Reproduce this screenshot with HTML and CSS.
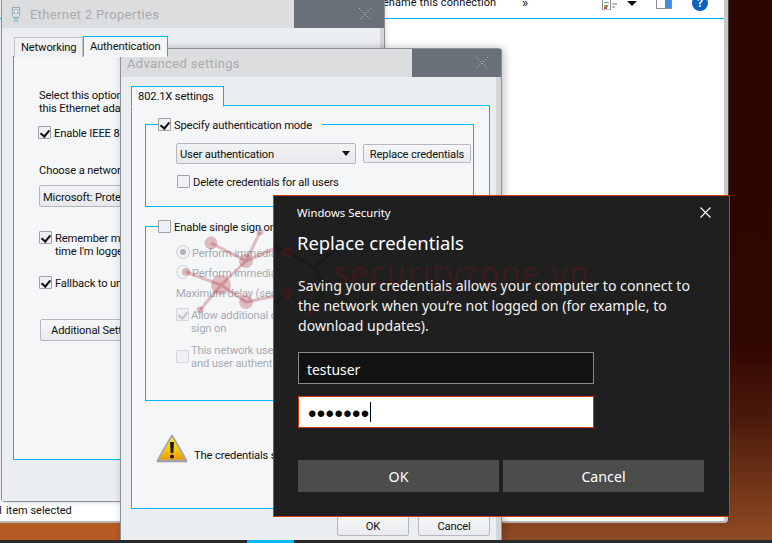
FILE: index.html
```html
<!DOCTYPE html>
<html lang="en">
<head>
<meta charset="utf-8">
<title>Replace credentials</title>
<link rel="stylesheet" href="styles.css">
</head>
<body>
<div class="desktop">
  <section class="explorer">
    <div class="toolbar">
      <span class="toolbar-label">Rename this connection</span>
      <span class="toolbar-more">»</span>
      <svg class="tb-view" width="16" height="10" viewBox="0 0 16 10"><path d="M1.5 -3h8v13h-8z" fill="#fff" stroke="#8d8d8d"/><path d="M3 2h5v1H3z" fill="#7a96b8"/><path d="M3 5h2v2H3z" fill="#c9a13c"/><path d="M5 5h2v2H5z" fill="#5ea05e"/><path d="M3 7h3v2H3z" fill="#b2584a"/><path d="M11 4h5M11 7h3" stroke="#777"/></svg>
      <span class="tb-caret"></span>
      <svg class="tb-pane" width="16" height="9" viewBox="0 0 16 9"><path d="M.5 -3h15v11.500H.5z" fill="#fff" stroke="#8d8d8d"/><path d="M9 -2h6v10H9z" fill="#3d8fdf"/></svg>
      <span class="tb-help">?</span>
    </div>
    <div class="explorer-space"></div>
    <div class="statusbar">1 item selected</div>
  </section>

  <section class="window props">
    <header class="titlebar">
      <svg class="net-icon" width="10" height="15" viewBox="0 0 10 15"><path d="M1.5 .5h7v8l-1.500 2h-4l-1.500-2z" fill="#d8e2e8" stroke="#98a8b0"/><path d="M3.500 2.500h3v4h-3z" fill="#f2f6f8" stroke="#a8b6bc"/><path d="M3 11h1v4H3zM4.500 11h1v4h-1zM6 11h1v4H6z" fill="#7fc4e8"/></svg>
      <span class="title-text">Ethernet 2 Properties</span>
      <span class="title-close"><svg width="14" height="14" viewBox="0 0 14 14"><path d="M1 1l12 12M13 1L1 13" stroke="#aeb3b9" stroke-dasharray="1.400 1.400"/></svg></span>
    </header>
    <div class="window-body props-body">
      <div class="tabs">
        <span class="tab tab-plain">Networking</span>
        <span class="tab tab-active props-active">Authentication</span>
      </div>
      <div class="pane props-pane">
        <p class="t p-intro">Select this option<br>this Ethernet adap</p>
        <label class="row p-enable"><span class="check on"></span><span class="t">Enable IEEE 8</span></label>
        <p class="t p-choose">Choose a networ</p>
        <div class="combo p-combo"><span class="t">Microsoft: Protec</span></div>
        <label class="row p-remember"><span class="check on"></span><span class="t">Remember my<br>time I'm logge</span></label>
        <label class="row p-fallback"><span class="check on"></span><span class="t">Fallback to un</span></label>
        <span class="btn p-additional">Additional Sett</span>
      </div>
    </div>
  </section>

  <section class="window advanced">
    <header class="titlebar">
      <span class="title-text adv-title">Advanced settings</span>
      <span class="title-close"><svg width="14" height="14" viewBox="0 0 14 14"><path d="M1 1l12 12M13 1L1 13" stroke="#aeb3b9" stroke-dasharray="1.400 1.400"/></svg></span>
    </header>
    <div class="window-body adv-body">
      <div class="tabs">
        <span class="tab tab-active adv-active">802.1X settings</span>
      </div>
      <div class="pane adv-pane">
        <fieldset class="group g-mode">
          <legend class="legend"><span class="check on"></span><span class="t">Specify authentication mode</span></legend>
          <div class="mode-row">
            <div class="combo mode-combo"><span class="t">User authentication</span><span class="arrow"></span></div>
            <span class="btn replace">Replace credentials</span>
          </div>
          <label class="row delete"><span class="check"></span><span class="t">Delete credentials for all users</span></label>
        </fieldset>
        <fieldset class="group g-sso">
          <legend class="legend"><span class="check"></span><span class="t">Enable single sign on</span></legend>
          <div class="row dis s1"><span class="radio on"></span><span class="t">Perform immediat</span></div>
          <div class="row dis s2"><span class="radio"></span><span class="t">Perform immediat</span></div>
          <p class="t dis s3">Maximum delay (sec</p>
          <div class="row dis s4"><span class="check on dim"></span><span class="t">Allow additional d<br>sign on</span></div>
          <div class="row dis s5"><span class="check dim"></span><span class="t">This network use<br>and user authent</span></div>
        </fieldset>
        <div class="row warning">
          <svg width="32" height="29" viewBox="0 0 32 29"><defs><linearGradient id="wy" x1="0" y1="0" x2="0" y2="1"><stop offset="0" stop-color="#fff600"/><stop offset=".55" stop-color="#fbc80a"/><stop offset="1" stop-color="#e79a00"/></linearGradient></defs><path d="M16 1.500 L30.500 26.500 H1.500 Z" fill="url(#wy)" stroke="#a9a9a9" stroke-width="2" stroke-linejoin="round"/><path d="M1 27.500h30" stroke="#9c9c9c" stroke-width="1.500"/><path d="M14 8h4l-.7 11h-2.600z" fill="#1a1a1a"/><circle cx="16" cy="22.500" r="2" fill="#1a1a1a"/></svg>
          <span class="t">The credentials s</span>
        </div>
      </div>
      <div class="footer">
        <span class="btn foot-btn">OK</span>
        <span class="btn foot-btn">Cancel</span>
      </div>
    </div>
  </section>

  <svg class="logo logo-light" width="110" height="120" viewBox="0 0 110 120" aria-hidden="true"><g class="wm-lines" stroke-width="3" fill="none"><path d="M31 31L66 49L80 20M66 49L41 73L6 60M41 73L66 90L110 81M41 73L20 98M66 49L110 30"/></g><g class="wm-dots"><circle cx="31" cy="31" r="6.500"/><circle cx="6" cy="60" r="4"/><circle cx="66" cy="49" r="7"/><circle cx="80" cy="20" r="3.500"/><circle cx="41" cy="73" r="10"/><circle cx="66" cy="90" r="7"/><circle cx="20" cy="98" r="3.500"/></g></svg>

  <section class="dialog">
    <svg class="logo logo-dark" width="80" height="90" viewBox="0 0 80 90" aria-hidden="true"><g class="wd-lines" stroke-width="2.500" fill="none"><path d="M0 20L13 26L40 41L62 24M40 41L52 62L36 86M13 67L36 86M0 78L13 67"/></g><g class="wd-dots"><circle cx="13" cy="26" r="6"/><circle cx="13" cy="67" r="6"/><circle cx="36" cy="86" r="4"/></g></svg>
    <header class="dialog-head">
      <span class="dialog-app">Windows Security</span>
      <svg class="dialog-x" width="11" height="11" viewBox="0 0 11 11"><path d="M.5.5l10 10M10.500.5l-10 10" stroke="#fff" stroke-width="1.100"/></svg>
    </header>
    <h1 class="dialog-title">Replace credentials</h1>
    <p class="wm-text">securityzone.vn</p>
    <p class="dialog-copy">Saving your credentials allows your computer to connect to the network when you’re not logged on (for example, to download updates).</p>
    <div class="field field-user">testuser</div>
    <div class="field field-pass"><span class="dots">•••••••</span><span class="caret"></span></div>
    <div class="dialog-actions">
      <span class="dialog-btn">OK</span>
      <span class="dialog-btn">Cancel</span>
    </div>
  </section>

  <div class="taskbar"><span class="task-active"></span></div>
</div>
</body>
</html>
```
FILE: styles.css
```css
* { box-sizing: border-box; }
html, body { margin: 0; padding: 0; }
body { width: 772px; height: 543px; overflow: hidden; font-family: Roboto, sans-serif; font-size: 11.200px; letter-spacing: -.15px; color: #111; }
p { margin: 0; }
.t { line-height: 13px; white-space: nowrap; transform: translateY(1px); }
.desktop {
  position: relative; width: 772px; height: 543px; overflow: hidden;
  background: linear-gradient(to bottom, #2f0500 0, #300602 340px, #4c1a0b 420px, #8a4720 530px, #8f4a22 543px);
}
.desktop::before {
  content: ""; position: absolute; left: 0; bottom: 3px; width: 360px; height: 30px; background: #b55b24;
}

/* explorer behind everything */
.explorer {
  position: absolute; left: 0; top: 0; width: 728px; height: 523px;
  display: flex; flex-direction: column;
  background: #fff; border-right: 4px solid #c6c7c8; border-bottom: 2px solid #b4b4b4; border-bottom-right-radius: 4px;
  box-shadow: 1px 0 0 #50453f;
}
.toolbar {
  height: 19px; flex: none; display: flex; align-items: flex-start; overflow: hidden;
  border-bottom: 1px solid #00b7f5; padding-left: 376px;
}
.toolbar-label { width: 146px; margin-top: -5px; line-height: 16px; letter-spacing: .1px; font-size: 11px; white-space: nowrap; }
.toolbar-more { width: 79px; margin-top: -5px; line-height: 16px; font-size: 13px; }
.tb-view { margin-right: 10px; }
.tb-caret { width: 0; height: 0; margin-top: 1px; margin-right: 19px; border-left: 5px solid transparent; border-right: 5px solid transparent; border-top: 5px solid #111; }
.tb-pane { margin-right: 20px; }
.tb-help { width: 16px; height: 16px; margin-top: -5px; border-radius: 50%; background: #0b63bd; color: #fff; text-align: center; font-weight: 700; font-size: 12px; line-height: 16px; }
.explorer-space { flex: 1; }
.statusbar { height: 20px; margin-left: -3px; line-height: 19px; font-size: 11px; letter-spacing: 0; white-space: nowrap; }

/* classic dialogs */
.window { position: absolute; display: flex; flex-direction: column; border-radius: 4px 4px 0 0; background: #ebeef1; }
.props { left: 1px; top: 0; width: 384px; height: 502px; border: 1px solid #8d9299; border-top: 0; box-shadow: 0 0 5px rgba(0,0,0,.2); border-radius: 0 0 4px 4px; }
.advanced { left: 120px; top: 48px; width: 382px; height: 492px; border: 1px solid #8d9299; border-bottom: 0; box-shadow: 2px 0 8px rgba(0,0,0,.25); }
.titlebar { height: 28px; flex: none; display: flex; align-items: center; background: linear-gradient(to right, #dcddde 0, #dcddde 76.500%, #6a7079 76.500%); }
.net-icon { margin-left: 9px; margin-right: 9px; }
.title-text { flex: 1; font-size: 13px; letter-spacing: .35px; color: #a8abae; white-space: nowrap; }
.adv-title { padding-left: 6px; }
.title-close { display: flex; margin-right: 12px; }
.window-body { flex: 1; display: flex; flex-direction: column; min-height: 0; }
.props-body { padding: 9px 7px 41px 8px; border-left: 3px solid #ebeef1; border-right: 4px solid #d3d5d8; }
.adv-body { padding: 9px 6px 0 10px; border-right: 5px solid #d3d5d8; }
.tabs { display: flex; height: 20px; flex: none; align-items: flex-end; position: relative; z-index: 1; margin-bottom: -1px; }
.tab { display: block; white-space: nowrap; line-height: 20px; }
.tab-plain { width: 69px; height: 20px; padding-left: 6px; margin-left: 1px; border: 1px solid #c2c5c9; border-bottom: 0; background: #eff1f3; }
.tab-active { height: 21px; border: 1px solid #00b7f5; border-bottom-color: #f5f6f8; background: #f5f6f8; }
.props-active { width: 85px; padding-left: 6px; }
.adv-active { width: 93px; padding-left: 6px; height: 21px; margin-bottom: -1px; }
.pane { flex: 1; position: relative; background: #f5f6f8; border: 1px solid #00b7f5; min-height: 0; }
.props-pane { padding: 31px 0 0 25px; }
.adv-pane { padding: 12px 15px 0 13px; }
.footer { height: 31px; flex: none; display: flex; justify-content: flex-end; gap: 9px; align-items: flex-end; padding-bottom: 4px; }

.row { display: flex; align-items: center; gap: 3px; }
.check { width: 13px; height: 13px; flex: none; border: 1px solid #9fa3a8; background: #eef0f3; position: relative; border-radius: 1px; }
.check.on::after { content: ""; position: absolute; left: 3px; top: 1px; width: 4px; height: 7px; border: solid #111; border-width: 0 2px 2px 0; transform: rotate(40deg); }
.check.dim { border-color: #d4d6d9; }
.check.dim::after { border-color: #c2c5c9; }
.radio { width: 14px; height: 14px; flex: none; border: 1px solid #d0d2d5; border-radius: 50%; background: #f0f1f3; position: relative; }
.radio.on::after { content: ""; position: absolute; left: 3px; top: 3px; width: 6px; height: 6px; border-radius: 50%; background: #b3b5b8; }
.dis, .dis .t { color: #a9abb1; }
.combo { display: flex; align-items: center; justify-content: space-between; border: 1px solid #b5b8bc; border-radius: 2px; background: linear-gradient(#f2f3f5, #e6e8eb); padding: 0 3px; }
.arrow { width: 0; height: 0; margin-right: 2px; border-left: 4px solid transparent; border-right: 4px solid transparent; border-top: 5px solid #111; }
.btn { display: flex; align-items: center; justify-content: center; border: 1px solid #b5b8bc; border-radius: 2px; background: linear-gradient(#f5f6f7, #e9ebee); white-space: nowrap; padding-top: 1px; }

/* properties content */
.p-enable { margin-top: 12px; margin-left: -1px; height: 13px; }
.p-choose { margin-top: 24px; }
.p-combo { width: 300px; height: 22px; margin-top: 9px; }
.p-remember { margin-top: 24px; align-items: flex-start; }
.p-fallback { margin-top: 19px; }
.p-additional { width: 120px; height: 22px; margin: 30px 0 0 1px; justify-content: flex-start; padding-left: 10px; }

/* advanced content */
.group { margin: 0; padding: 0 0 0 30px; border: 1px solid #00b7f5; min-width: 0; }
.legend { display: flex; align-items: center; gap: 3px; padding: 0 10px 0 0; margin-left: -18px; height: 13px; }
.g-mode { height: 89px; padding-top: 12px; }
.g-sso { height: 181px; margin-top: 13px; padding-top: 12px; padding-right: 12px; }
.mode-row { display: flex; gap: 7px; align-items: center; }
.mode-combo { width: 180px; height: 21px; }
.replace { width: 108px; height: 19px; }
.delete { margin-top: 11px; margin-left: 1px; }
.dis.row { gap: 2px; }
.s2 { margin-top: 6px; }
.s3 { margin-top: 7px; }
.s4 { margin-top: 9px; align-items: flex-start; }
.s5 { margin-top: 9px; align-items: center; }
.warning { margin: 33px 0 0 11px; gap: 6px; }
.warning .t { margin-top: 12px; }
.foot-btn { width: 72px; height: 20px; }

/* dark credential dialog */
.dialog {
  position: absolute; left: 273px; top: 195px; width: 457px; height: 322px; overflow: hidden;
  padding: 0 24px; background: #1f1f1f; border: 1px solid #d83b01; color: #fff;
  font-family: "Noto Sans", sans-serif; letter-spacing: 0; z-index: 2;
}
.dialog-head { position: relative; display: flex; justify-content: space-between; align-items: center; height: 32px; }
.dialog-app { font-size: 11.300px; margin-left: -1px; white-space: nowrap; }
.dialog-x { margin-right: -6px; }
.dialog-title { position: relative; margin: 2px 0 0 -1px; font-size: 18.400px; font-weight: 400; line-height: 26px; white-space: nowrap; }
.dialog-copy { position: relative; margin: 20px 0 0; width: 408px; font-size: 14.100px; line-height: 20px; color: #f2f2f2; }
.field { position: relative; width: 296px; height: 32px; padding-left: 8px; font-size: 13.900px; }
.field-user { background: #121212; border: 1px solid #8a8a8a; margin-top: 16px; line-height: 33px; }
.field-pass { background: #fff; border: 1px solid #d83b01; margin-top: 12px; color: #000; display: flex; align-items: center; padding-left: 9px; }
.dots { font-family: "Liberation Sans", sans-serif; font-size: 24px; line-height: 30px; letter-spacing: .4px; margin-top: 3px; }
.caret { width: 1px; height: 20px; background: #000; }
.dialog-actions { position: relative; display: flex; gap: 4px; margin-top: 32px; width: 406px; }
.dialog-btn { flex: 1; height: 32px; background: #4c4c4c; text-align: center; font-size: 14.200px; line-height: 34px; }

/* overlays: the watermark laid over the screenshot */
.logo { position: absolute; pointer-events: none; }
.logo-light { left: 180px; top: 212px; z-index: 1; }
.logo-dark { left: 0; top: 30px; }
.wm-lines { stroke: rgba(170,50,60,.3); }
.wm-dots { fill: rgba(170,50,60,.3); }
.wd-lines { stroke: rgba(0,0,0,.18); }
.wd-dots { fill: rgba(140,20,20,.2); }
.wm-text { position: absolute; left: 59px; top: 58px; font-size: 32px; line-height: 38px; letter-spacing: 1.5px; color: rgba(140,15,15,.27); white-space: nowrap; }
.taskbar { position: absolute; left: 0; right: 0; bottom: 0; height: 3px; background: #2a2a2a; z-index: 4; }
.task-active { position: absolute; left: 247px; width: 47px; height: 3px; background: #00b7f5; }
```
